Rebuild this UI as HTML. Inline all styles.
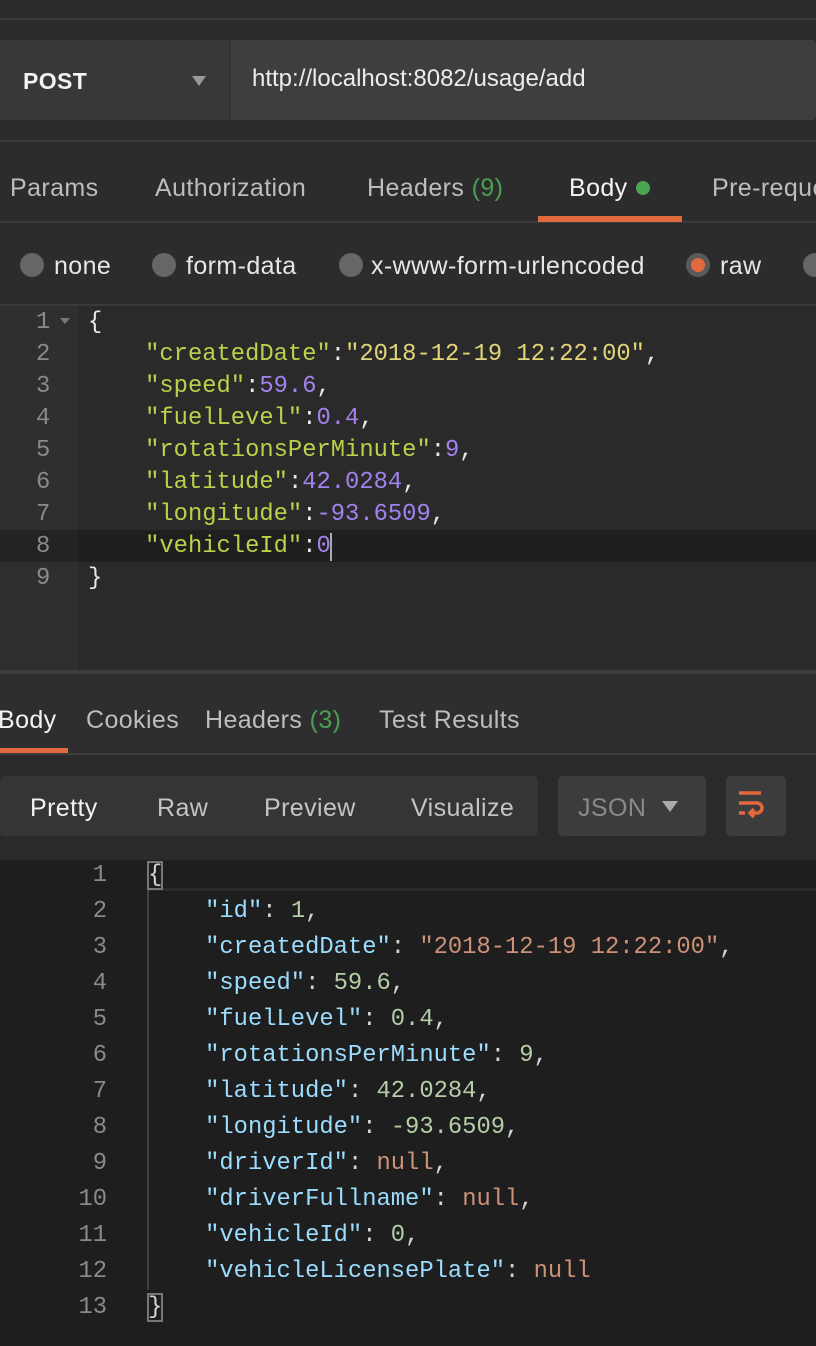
<!DOCTYPE html>
<html><head><meta charset="utf-8"><style>
*{margin:0;padding:0;box-sizing:border-box}
html,body{width:816px;height:1346px;overflow:hidden}
body{background:#2c2c2c;position:relative;font-family:"Liberation Sans",sans-serif;color:#c8c8c8}
.a{position:absolute;white-space:pre}
.ui{font-size:25px;line-height:30px;letter-spacing:0.4px}
.m{font-family:"Liberation Mono",monospace;font-size:23.8px;white-space:pre;position:absolute}
.k{color:#b8d24a}.s{color:#e2d579}.n{color:#a382f0}.w{color:#e8e8e8}
.rk{color:#9cdcfe}.rs{color:#ce9178}.rn{color:#b5cea8}
.g{color:#8a8a8a}
</style></head><body>
<div class="a" style="left:0;top:18px;width:816px;height:2px;background:#3a3a3a"></div>
<div class="a" style="left:0;top:40px;width:816px;height:80px;background:#3e3e3e;border-radius:4px"></div>
<div class="a" style="left:0;top:40px;width:231px;height:80px;background:#383838;border-right:2px solid #333"></div>
<div class="a ui" style="left:23px;top:66px;color:#f2f2f2;font-weight:bold;font-size:23px">POST</div>
<div class="a" style="left:192px;top:76px;width:0;height:0;border-left:7px solid transparent;border-right:7px solid transparent;border-top:10px solid #9a9a9a"></div>
<div class="a ui" style="left:252px;top:64px;color:#ececec;font-size:24px;letter-spacing:0">http://localhost:8082/usage/add</div>
<div class="a" style="left:0;top:140px;width:816px;height:2px;background:#3a3a3a"></div>
<div class="a ui" style="left:10px;top:173px;color:#bdbdbd">Params</div>
<div class="a ui" style="left:155px;top:173px;color:#bdbdbd">Authorization</div>
<div class="a ui" style="left:367px;top:173px;color:#bdbdbd">Headers <span style="color:#4a9e52">(9)</span></div>
<div class="a ui" style="left:569px;top:173px;color:#f4f4f4">Body</div>
<div class="a" style="left:636px;top:181px;width:14px;height:14px;border-radius:50%;background:#4aa552"></div>
<div class="a ui" style="left:712px;top:173px;color:#bdbdbd;width:104px;overflow:hidden">Pre-reque</div>
<div class="a" style="left:0;top:221px;width:816px;height:2px;background:#3a3a3a"></div>
<div class="a" style="left:538px;top:216px;width:144px;height:6px;background:#e2693e"></div>
<div class="a" style="left:20px;top:253px;width:24px;height:24px;border-radius:50%;background:#666"></div>
<div class="a ui" style="left:54px;top:251px;color:#e6e6e6">none</div>
<div class="a" style="left:152px;top:253px;width:24px;height:24px;border-radius:50%;background:#666"></div>
<div class="a ui" style="left:186px;top:251px;color:#e6e6e6">form-data</div>
<div class="a" style="left:339px;top:253px;width:24px;height:24px;border-radius:50%;background:#666"></div>
<div class="a ui" style="left:371px;top:251px;color:#e6e6e6">x-www-form-urlencoded</div>
<div class="a" style="left:686px;top:253px;width:24px;height:24px;border-radius:50%;background:#e2693e;border:5px solid #5a5a5a"></div>
<div class="a ui" style="left:720px;top:251px;color:#e6e6e6">raw</div>
<div class="a" style="left:803px;top:253px;width:13px;height:24px;border-radius:12px 0 0 12px;background:#666"></div>
<div class="a" style="left:0;top:304px;width:816px;height:2px;background:#3a3a3a"></div>
<div class="a" style="left:0;top:306px;width:78px;height:364px;background:#2f2f2f"></div>
<div class="a" style="left:78px;top:306px;width:738px;height:364px;background:#2a2a2a"></div>
<div class="a" style="left:0;top:530px;width:816px;height:32px;background:#232323"></div>
<div class="a" style="left:78px;top:530px;width:738px;height:32px;background:#1f1f1f"></div>
<div class="a" style="left:60px;top:318px;width:0;height:0;border-left:5px solid transparent;border-right:5px solid transparent;border-top:6px solid #777"></div>
<div class="m g" style="left:36px;top:307px;line-height:32px">1
2
3
4
5
6
7
8
9</div>
<div class="m w" style="left:88px;top:307px;line-height:32px">{
    <span class="k">"createdDate"</span>:<span class="s">"2018-12-19 12:22:00"</span>,
    <span class="k">"speed"</span>:<span class="n">59.6</span>,
    <span class="k">"fuelLevel"</span>:<span class="n">0.4</span>,
    <span class="k">"rotationsPerMinute"</span>:<span class="n">9</span>,
    <span class="k">"latitude"</span>:<span class="n">42.0284</span>,
    <span class="k">"longitude"</span>:<span class="n">-93.6509</span>,
    <span class="k">"vehicleId"</span>:<span class="n">0</span>
}</div>
<div class="a" style="left:330px;top:533px;width:2px;height:28px;background:#aaa"></div>
<div class="a" style="left:0;top:670px;width:816px;height:4px;background:#3c3c3c"></div>
<div class="a" style="left:0;top:674px;width:816px;height:80px;background:#2e2e2e"></div>
<div class="a ui" style="left:-2px;top:705px;color:#f4f4f4">Body</div>
<div class="a ui" style="left:86px;top:705px;color:#bdbdbd">Cookies</div>
<div class="a ui" style="left:205px;top:705px;color:#bdbdbd">Headers <span style="color:#4a9e52">(3)</span></div>
<div class="a ui" style="left:379px;top:705px;color:#bdbdbd">Test Results</div>
<div class="a" style="left:0;top:748px;width:68px;height:6px;background:#e2693e"></div>
<div class="a" style="left:0;top:753px;width:816px;height:2px;background:#3c3c3c"></div>
<div class="a" style="left:0;top:755px;width:816px;height:105px;background:#2a2a2a"></div>
<div class="a" style="left:0;top:776px;width:538px;height:60px;background:#353535;border-radius:5px"></div>
<div class="a ui" style="left:30px;top:793px;color:#f2f2f2">Pretty</div>
<div class="a ui" style="left:157px;top:793px;color:#c4c4c4">Raw</div>
<div class="a ui" style="left:264px;top:793px;color:#c4c4c4">Preview</div>
<div class="a ui" style="left:411px;top:793px;color:#c4c4c4">Visualize</div>
<div class="a" style="left:558px;top:776px;width:148px;height:60px;background:#3c3c3c;border-radius:5px"></div>
<div class="a ui" style="left:578px;top:793px;color:#8a8a8a">JSON</div>
<div class="a" style="left:662px;top:801px;width:0;height:0;border-left:8px solid transparent;border-right:8px solid transparent;border-top:11px solid #aaa"></div>
<div class="a" style="left:726px;top:776px;width:60px;height:60px;background:#3c3c3c;border-radius:5px"></div>
<svg class="a" style="left:726px;top:776px" width="60" height="60"><g stroke="#e2693e" stroke-width="3.5" fill="none"><path d="M13 17H35"/><path d="M13 27H31a5 5 0 0 1 0 10H26"/><path d="M13 37H19"/><path d="M28 33l-4 4 4 4"/></g></svg>
<div class="a" style="left:0;top:860px;width:816px;height:486px;background:#1e1e1e"></div>
<div class="a" style="left:148px;top:888px;width:668px;height:3px;background:#2a2a2a"></div>
<div class="a" style="left:147px;top:890px;width:2px;height:400px;background:#404040"></div>
<div class="m g" style="left:64px;top:858px;line-height:36px;text-align:right;width:43px">1
2
3
4
5
6
7
8
9
10
11
12
13</div>
<div class="m" style="left:148px;top:858px;line-height:36px;color:#d4d4d4"><span style="outline:2px solid #777;outline-offset:-1px">{</span>
    <span class="rk">"id"</span>: <span class="rn">1</span>,
    <span class="rk">"createdDate"</span>: <span class="rs">"2018-12-19 12:22:00"</span>,
    <span class="rk">"speed"</span>: <span class="rn">59.6</span>,
    <span class="rk">"fuelLevel"</span>: <span class="rn">0.4</span>,
    <span class="rk">"rotationsPerMinute"</span>: <span class="rn">9</span>,
    <span class="rk">"latitude"</span>: <span class="rn">42.0284</span>,
    <span class="rk">"longitude"</span>: <span class="rn">-93.6509</span>,
    <span class="rk">"driverId"</span>: <span class="rs">null</span>,
    <span class="rk">"driverFullname"</span>: <span class="rs">null</span>,
    <span class="rk">"vehicleId"</span>: <span class="rn">0</span>,
    <span class="rk">"vehicleLicensePlate"</span>: <span class="rs">null</span>
<span style="outline:2px solid #777;outline-offset:-1px">}</span></div>
</body></html>
